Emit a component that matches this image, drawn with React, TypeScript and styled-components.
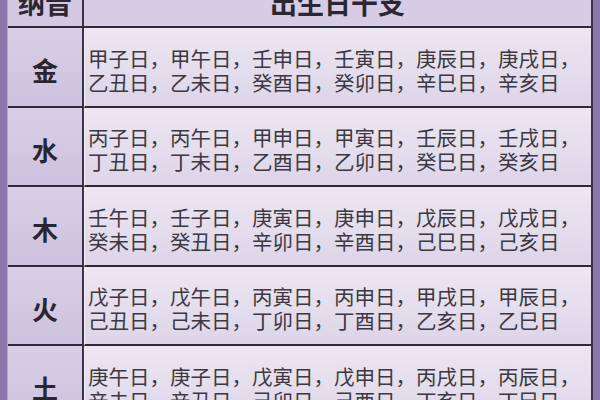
import React from 'react'
import styled, { createGlobalStyle } from 'styled-components'

const GlobalStyle = createGlobalStyle`
    html, body {
        margin: 0;
        padding: 0;
        background: #8b77ab;
        overflow: hidden;
    }
`

interface IRow {
    element: string;
    first: string[];
    second: string[];
}

const rows: IRow[] = [
    { element: '金', first: ['甲子', '甲午', '壬申', '壬寅', '庚辰', '庚戌'], second: ['乙丑', '乙未', '癸酉', '癸卯', '辛巳', '辛亥'] },
    { element: '水', first: ['丙子', '丙午', '甲申', '甲寅', '壬辰', '壬戌'], second: ['丁丑', '丁未', '乙酉', '乙卯', '癸巳', '癸亥'] },
    { element: '木', first: ['壬午', '壬子', '庚寅', '庚申', '戊辰', '戊戌'], second: ['癸未', '癸丑', '辛卯', '辛酉', '己巳', '己亥'] },
    { element: '火', first: ['戊子', '戊午', '丙寅', '丙申', '甲戌', '甲辰'], second: ['己丑', '己未', '丁卯', '丁酉', '乙亥', '乙巳'] },
    { element: '土', first: ['庚午', '庚子', '戊寅', '戊申', '丙戌', '丙辰'], second: ['辛未', '辛丑', '己卯', '己酉', '丁亥', '丁巳'] },
]

const Page = styled.div`
    width: 600px;
    height: 400px;
    padding-left: 7px;
    box-sizing: border-box;
    font-family: "Noto Sans CJK SC", "Noto Sans", sans-serif;
`

const Table = styled.div`
    width: 586px;
    display: grid;
    grid-template-columns: 76px 1fr;
    border-left: 1px solid #b3a5cc;
    border-right: 2px solid #3a3346;
    box-sizing: border-box;
`

const HeadCell = styled.div<{ $left?: boolean }>`
    height: 28px;
    box-sizing: border-box;
    overflow: hidden;
    display: flex;
    justify-content: center;
    align-items: flex-start;
    background: ${p => p.$left ? '#d2c8e1' : '#d6cde4'};
    border-bottom: 2px solid #2f2a3a;
    border-right: ${p => p.$left ? '2px solid #3a3346' : 'none'};
    font-size: 27px;
    font-weight: 700;
    line-height: 6px;
    color: #2b2733;
`

const ElementCell = styled.div`
    height: 79.5px;
    box-sizing: border-box;
    display: flex;
    justify-content: center;
    align-items: center;
    padding-top: 6px;
    background: linear-gradient(#d8cfe6, #cdc2de);
    border-bottom: 2px solid #2f2a3a;
    border-right: 2px solid #3a3346;
    font-size: 26px;
    font-weight: 700;
    color: #2a2630;
`

const DaysCell = styled.div`
    height: 79.5px;
    box-sizing: border-box;
    display: flex;
    flex-direction: column;
    justify-content: center;
    padding: 6px 0 0 3px;
    background: linear-gradient(#ece7f2, #ddd5e8);
    border-bottom: 2px solid #2f2a3a;
    border-left: 1px solid #f2eff6;
`

const DayLine = styled.div`
    font-size: 20.5px;
    line-height: 24px;
    color: #3c3842;
    white-space: nowrap;
`

const toLine = (items: string[], trailing: boolean) =>
    items.map(d => d + '日').join('，') + (trailing ? '，' : '')

export default function App() {
    return (
        <Page>
            <GlobalStyle />
            <Table>
                <HeadCell $left>纳音</HeadCell>
                <HeadCell>出生日干支</HeadCell>
                {rows.map(r => (
                    <React.Fragment key={r.element}>
                        <ElementCell>{r.element}</ElementCell>
                        <DaysCell>
                            <DayLine>{toLine(r.first, true)}</DayLine>
                            <DayLine>{toLine(r.second, false)}</DayLine>
                        </DaysCell>
                    </React.Fragment>
                ))}
            </Table>
        </Page>
    )
}
